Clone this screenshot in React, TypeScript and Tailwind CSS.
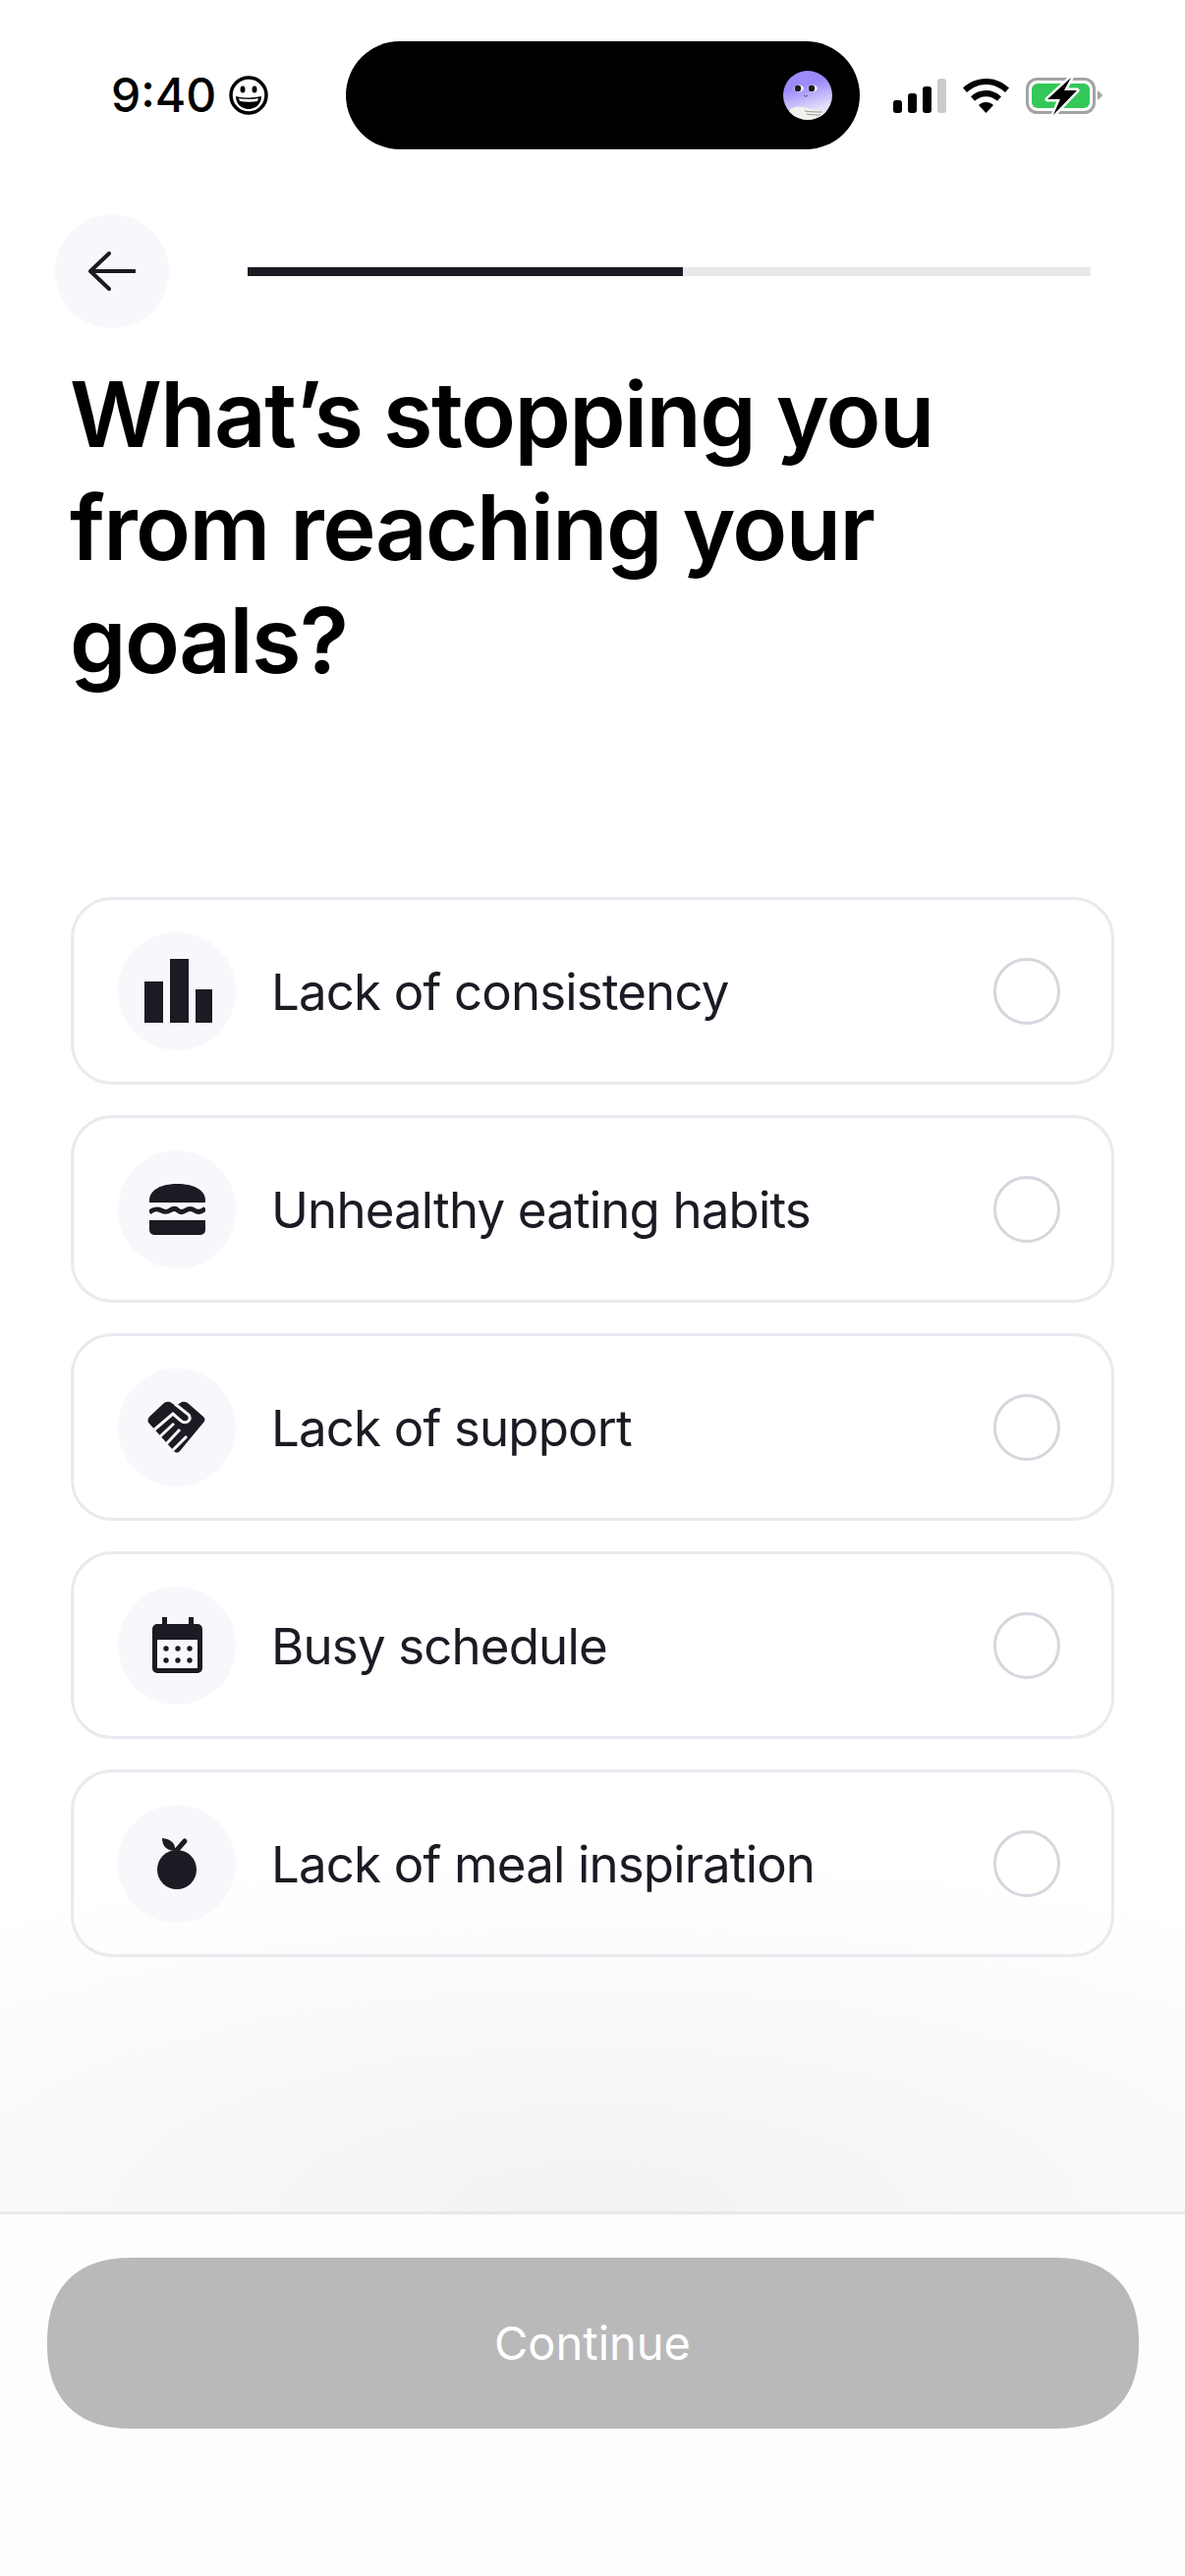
import { ReactNode } from 'react';

interface Reason {
  label: string;
  icon: ReactNode;
}

const ink = '#1c1a23';
const chip = '#f8f8fc';

function BarsIcon() {
  return (
    <svg className="ml-[3px]" width="70" height="66" viewBox="0 0 70 66" fill={ink}>
      <rect x="0" y="23" width="19" height="42" />
      <rect x="26" y="0" width="19" height="65" />
      <rect x="52" y="31" width="17" height="34" />
    </svg>
  );
}

function BurgerIcon() {
  return (
    <svg width="57" height="52" viewBox="0 0 57 52" fill={ink}>
      <path d="M0 19v-2C0 6 12 0 28.500 0S57 6 57 17v2z" />
      <path d="M0 29c5-4 8-4 12-2s6 2 9 0 6-2 8 0 5 2 8 0 6-2 9 0 7 2 11-2" fill="none" stroke={ink} strokeWidth="5" />
      <path d="M0 37h57v10a5 5 0 0 1-5 5H5a5 5 0 0 1-5-5z" />
    </svg>
  );
}

function HandshakeIcon() {
  return (
    <svg width="60" height="54" viewBox="0 0 60 54">
      <path d="M2 16 17 2q3-2 6-1l6 4 6-4q3-1 6 1l16 14q3 3 0 6L33 51q-3 3-6 0L2 23q-3-3 0-7z" fill={ink} />
      <g fill="none" stroke={chip} strokeWidth="3">
        <path d="M28 3 42 14q3 4-1 7-4 2-7-1l-8-7L5 31" />
        <path d="M12 37 27 23" />
        <path d="M19 44 33 29" />
        <path d="M26 50 40 36" />
      </g>
    </svg>
  );
}

function CalendarIcon() {
  return (
    <svg width="51" height="57" viewBox="0 0 51 57" fill={ink}>
      <rect x="10" y="0" width="5" height="10" />
      <rect x="37" y="0" width="5" height="10" />
      <path d="M5 7h41a5 5 0 0 1 5 5v40a5 5 0 0 1-5 5H5a5 5 0 0 1-5-5V12a5 5 0 0 1 5-5zm0 16v29h41V23z" fillRule="evenodd" />
      {[14, 26, 38].map((cx) => (
        <g key={cx}>
          <circle cx={cx} cy="32" r="2.700" />
          <circle cx={cx} cy="44" r="2.700" />
        </g>
      ))}
    </svg>
  );
}

function AppleIcon() {
  return (
    <svg width="40" height="53" viewBox="0 0 40 53" fill={ink}>
      <path d="M5 1c9 1 14 5 13 13C10 14 5 9 5 1z" />
      <path d="m20 13 8-9" stroke={ink} strokeWidth="5" strokeLinecap="round" />
      <circle cx="20" cy="33" r="20" />
    </svg>
  );
}

const reasons: Reason[] = [
  { label: 'Lack of consistency', icon: <BarsIcon /> },
  { label: 'Unhealthy eating habits', icon: <BurgerIcon /> },
  { label: 'Lack of support', icon: <HandshakeIcon /> },
  { label: 'Busy schedule', icon: <CalendarIcon /> },
  { label: 'Lack of meal inspiration', icon: <AppleIcon /> },
];

function StatusBar() {
  return (
    <div className="flex h-[110px] mt-[42px] items-center">
      <span className="ml-[113px] w-[107px] text-[48px] leading-none font-medium text-black">9:40</span>
      <svg className="ml-[13px]" width="40" height="40" viewBox="0 0 40 40">
        <circle cx="20" cy="20" r="18" fill="none" stroke="#000" strokeWidth="3.500" />
        <ellipse cx="14" cy="14" rx="2.500" ry="3.500" />
        <ellipse cx="26" cy="14" rx="2.500" ry="3.500" />
        <path d="M7 21c8 2 18 2 26 0 0 8-6 13-13 13S7 29 7 21z" />
        <path d="M10 23c6 1.200 14 1.200 20 0l-1 3c-6 1-12 1-18 0z" fill="#fff" />
      </svg>
      {/* dynamic island */}
      <div className="ml-[79px] flex h-[110px] w-[523px] items-center justify-end rounded-full bg-black pr-[28px]">
        <svg width="50" height="50" viewBox="0 0 50 50">
          <defs>
            <linearGradient id="avatarFill" x1="0" y1="0" x2="0.3" y2="1">
              <stop offset="0.4" stopColor="#9d8bfb" />
              <stop offset="0.9" stopColor="#e4dffb" />
            </linearGradient>
            <clipPath id="avatarClip">
              <circle cx="25" cy="25" r="25" />
            </clipPath>
          </defs>
          <circle cx="25" cy="25" r="25" fill="url(#avatarFill)" />
          <g clipPath="url(#avatarClip)">
            <path d="M6 42c1-5 8-6 14-5 8 2 14 3 24 4l-2 9H10z" fill="#f3f1ec" />
            <path d="M22 41c6 1 12 1 18 1M24 44c5 1 10 1 14 1" fill="none" stroke="#555" strokeWidth="0.600" />
          </g>
          <ellipse cx="16" cy="18" rx="5" ry="3.500" fill="#f3f1ec" />
          <ellipse cx="30" cy="18" rx="5" ry="3.500" fill="#f3f1ec" />
          <circle cx="15" cy="18" r="3.200" fill="#1c1a23" />
          <circle cx="29" cy="18" r="3.200" fill="#1c1a23" />
          <path d="M21 25c1 1.500 3 1.500 4 0" fill="none" stroke="#3b3160" strokeWidth="0.800" />
        </svg>
      </div>
      <svg className="ml-[34px]" width="54" height="35" viewBox="0 0 54 35">
        <rect x="0" y="22" width="9" height="13" rx="3" />
        <rect x="15" y="15" width="9" height="20" rx="3" />
        <rect x="30" y="8" width="9" height="27" rx="3" />
        <rect x="45" y="0" width="9" height="35" rx="3" fill="#cbcbcb" />
      </svg>
      <svg className="ml-[17px]" width="47" height="35" viewBox="0 0 47 35">
        <path d="M23.500 0C14.500 0 6.500 3.500 0 9.500l4 4.500C9.500 9 16 6 23.500 6S37.500 9 43 14l4-4.500C40.500 3.500 32.500 0 23.500 0z" />
        <path d="M23.500 12c-6 0-11 2.200-15.500 6.300l4 4.500c3-2.800 7-4.600 11.500-4.600S32 20 35 22.800l4-4.500C34.500 14.200 29.500 12 23.500 12z" />
        <path d="M23.500 24c-3 0-5.500 1-7.500 2.900L23.500 35 31 26.900C29 25 26.500 24 23.500 24z" />
      </svg>
      <svg className="ml-[17px]" width="78" height="40" viewBox="0 0 78 40">
        <rect x="1.500" y="3.500" width="68" height="34" rx="10" fill="none" stroke="#a3a3a3" strokeWidth="3" />
        <rect x="6" y="8" width="59" height="25" rx="6" fill="#34c759" />
        <path d="M73 15l4 3.500a2 2 0 0 1 0 3L73 25z" fill="#a3a3a3" />
        <path d="M46 2 22 24h13l-7 16 24-25H39z" fill="#000" stroke="#fff" strokeWidth="5" strokeLinejoin="round" paintOrder="stroke" />
      </svg>
    </div>
  );
}

export default function App() {
  return (
    <div className="relative flex h-[2622px] w-[1206px] flex-col overflow-hidden bg-white font-['Inter',sans-serif]">
      <StatusBar />

      {/* header */}
      <div className="mt-[66px] flex items-center pl-[56px] pr-[96px]">
        <button className="flex h-[116px] w-[116px] items-center justify-center rounded-full bg-[#f8f8fc]">
          <svg width="48" height="40" viewBox="0 0 48 40" fill="none" stroke={ink} strokeWidth="4" strokeLinecap="round" strokeLinejoin="round">
            <path d="M47 20H3" />
            <path d="M21 2 2 20l19 18" />
          </svg>
        </button>
        <div className="ml-[80px] flex h-[9px] flex-1 bg-[#e9e9e9]">
          <div className="h-full w-[443px] bg-[#1c1a23]" />
        </div>
      </div>

      <h1 className="mt-[30px] pl-[71px] text-[92px] leading-[115px] font-semibold tracking-[-1.6px] text-black">
        What’s stopping you
        <br />
        from reaching your
        <br />
        goals?
      </h1>

      <div className="absolute top-[1880px] left-0 h-[371px] w-full bg-[radial-gradient(ellipse_90%_100%_at_50%_100%,#f2f2f3_0%,#fafafa_60%,#ffffff00_100%)]" />

      {/* options */}
      <div className="relative mt-[204px] flex flex-col gap-[31px] px-[72px]">
        {reasons.map((reason) => (
          <div key={reason.label} className="flex h-[191px] items-center rounded-[42px] border-[3px] border-[#e9e9ef] pl-[45px] pr-[52px]">
            <div className="flex h-[120px] w-[120px] items-center justify-center rounded-full bg-[#f8f8fc]">{reason.icon}</div>
            <span className="ml-[36px] flex-1 pt-[3px] text-[51px] tracking-[-0.85px] text-[#1c1a23]">{reason.label}</span>
            <div className="h-[68px] w-[68px] rounded-full border-[3px] border-[#d6d6de]" />
          </div>
        ))}
      </div>

      {/* footer */}
      <div className="absolute top-[2251px] left-0 flex h-[371px] w-full flex-col items-center border-t-[3px] border-[#e9e9ec] bg-[#fdfdfd] pt-[44px]">
        <button className="flex h-[174px] w-[1111px] items-center justify-center rounded-[87px] bg-[#b9b9bb] text-[47px] text-white [corner-shape:superellipse(1.25)]">Continue</button>
      </div>
    </div>
  );
}
